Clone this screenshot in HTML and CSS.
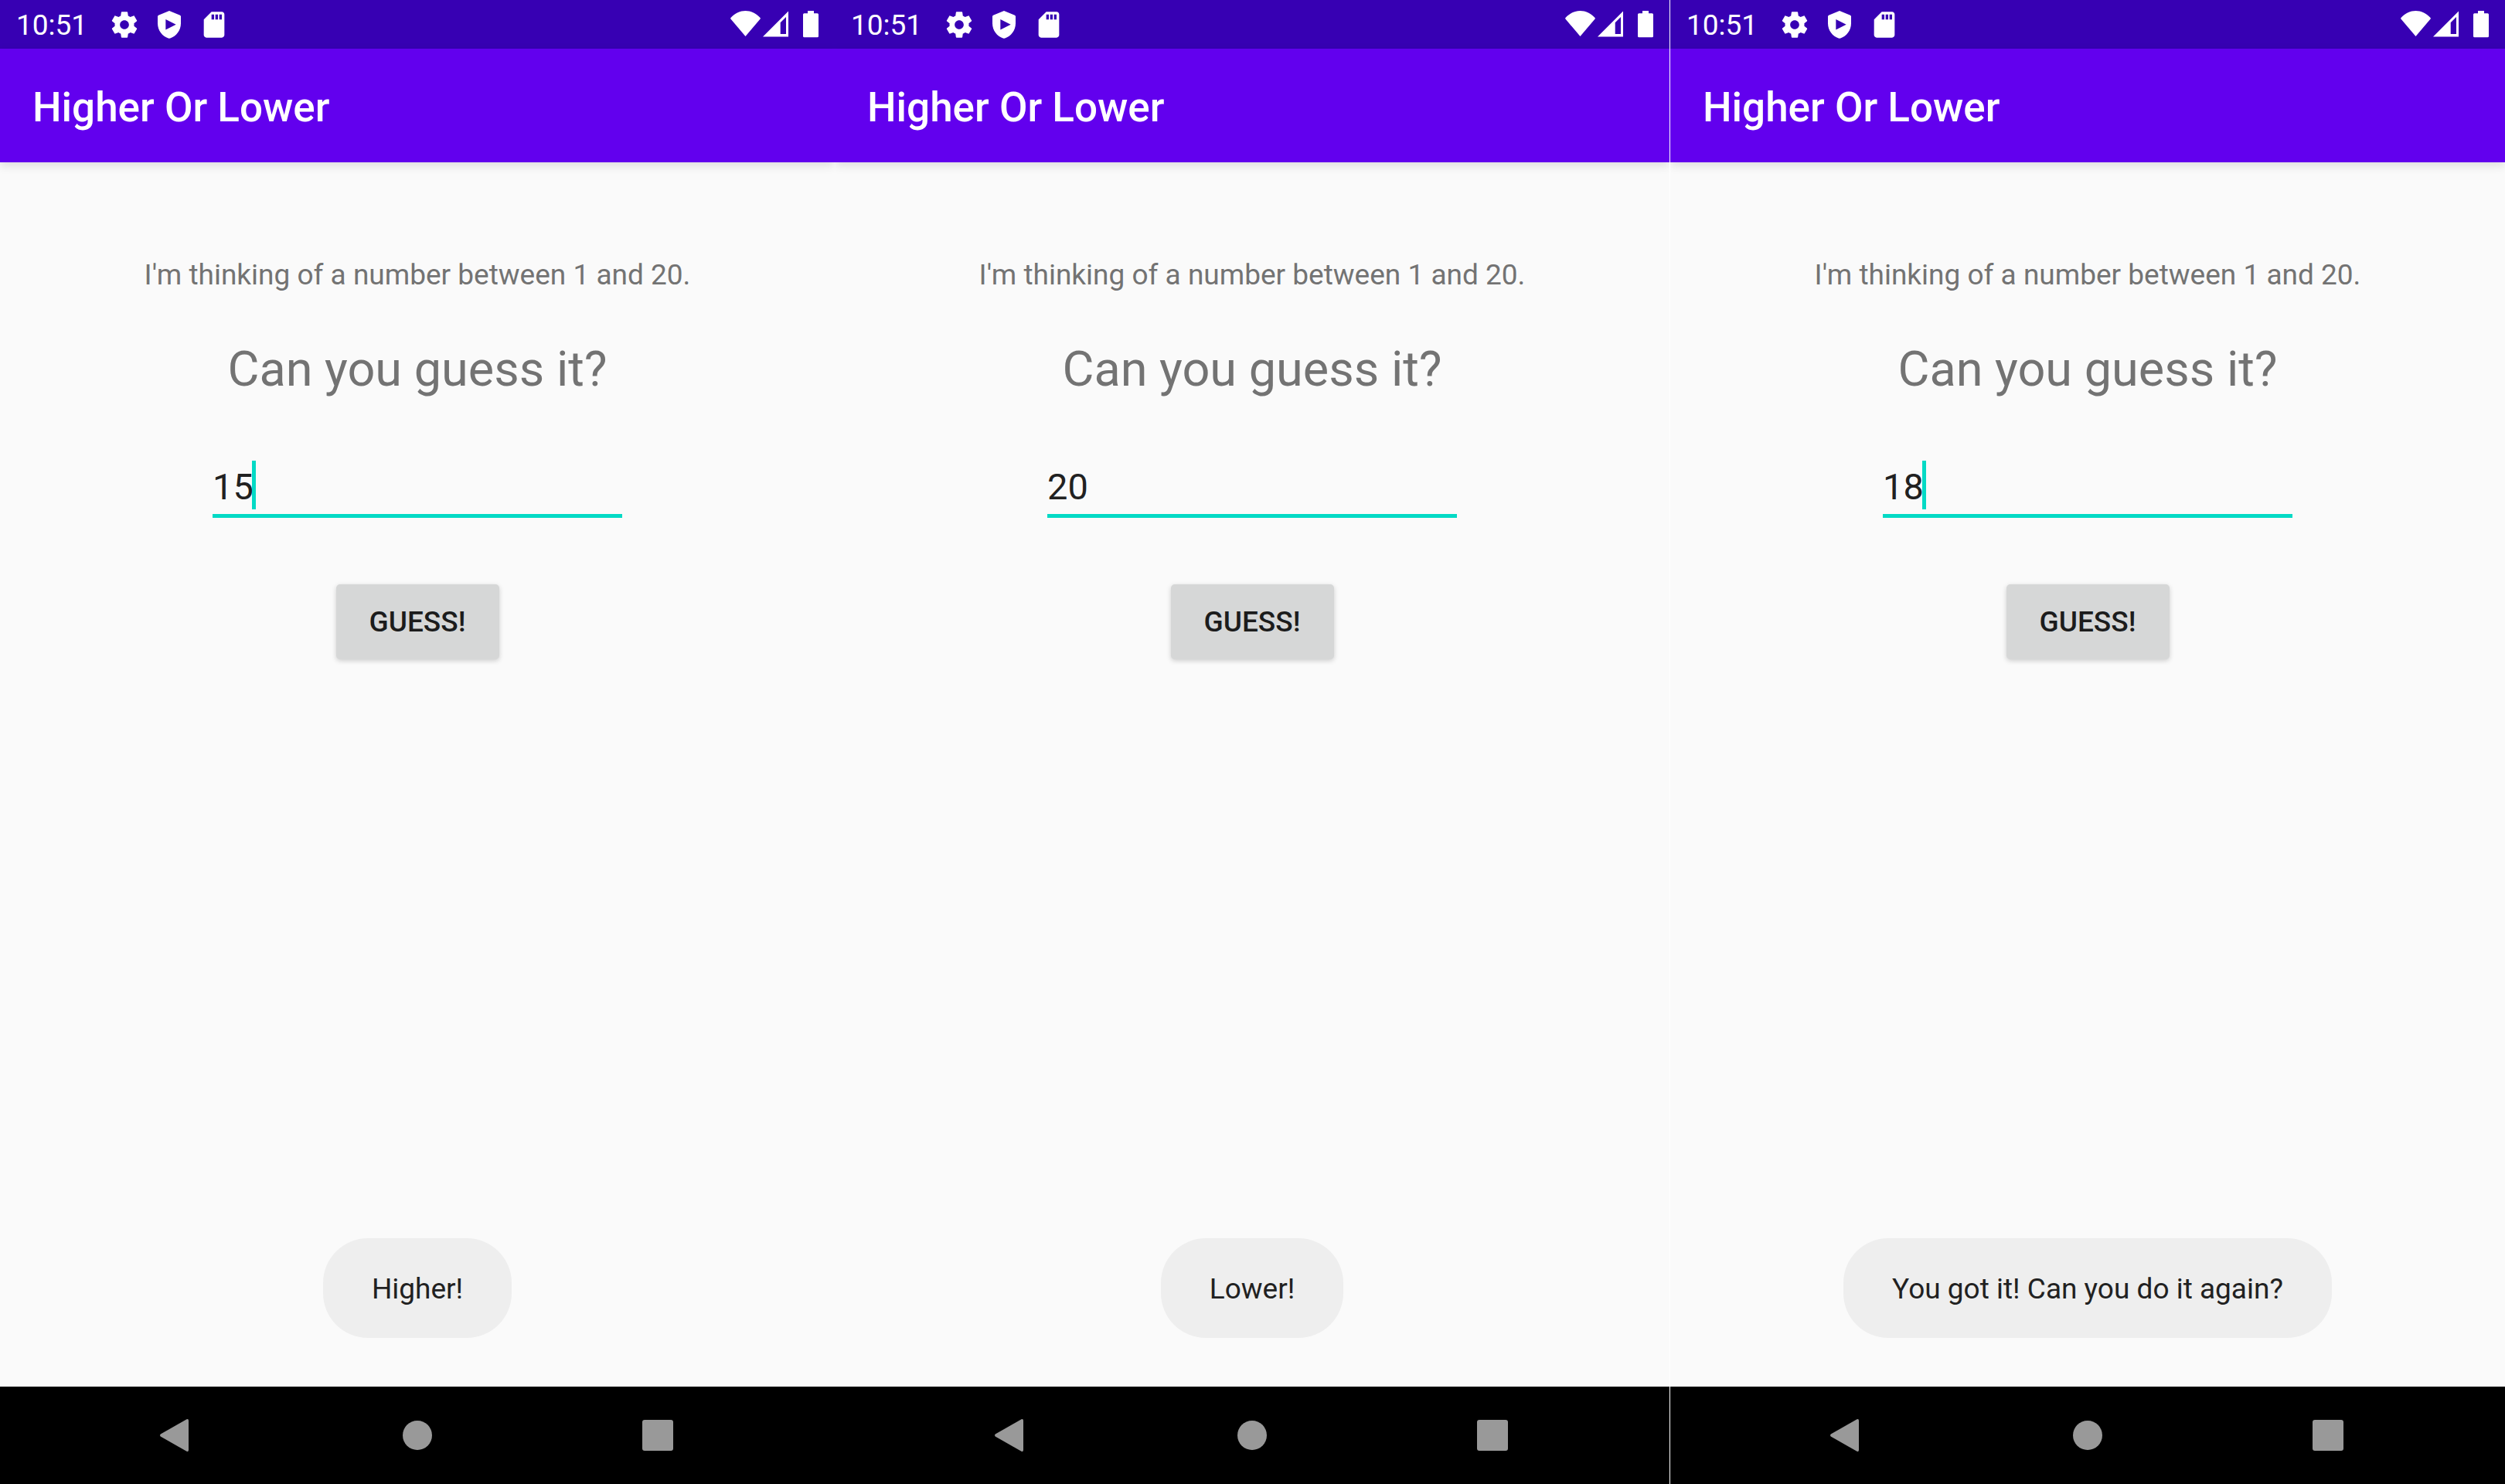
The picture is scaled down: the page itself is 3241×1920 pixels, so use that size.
FILE: index.html
```html
<!DOCTYPE html>
<html lang="en">
<head>
<meta charset="utf-8">
<meta name="viewport" content="width=device-width, initial-scale=1">
<title>Higher Or Lower</title>
<link rel="stylesheet" href="styles.css">
</head>
<body>
<svg class="sprite" aria-hidden="true">
  <symbol id="gear" viewBox="0 0 24 24"><path d="M19.43 12.98c.04-.32.07-.64.07-.98s-.03-.66-.07-.98l2.11-1.65c.19-.15.24-.42.12-.64l-2-3.46c-.12-.22-.39-.3-.61-.22l-2.49 1c-.52-.4-1.08-.73-1.69-.98l-.38-2.65C14.46 2.18 14.25 2 14 2h-4c-.25 0-.46.18-.49.42l-.38 2.65c-.61.25-1.17.59-1.69.98l-2.49-1c-.23-.09-.49 0-.61.22l-2 3.46c-.13.22-.07.49.12.64l2.11 1.65c-.04.32-.07.65-.07.98s.03.66.07.98l-2.11 1.65c-.19.15-.24.42-.12.64l2 3.46c.12.22.39.3.61.22l2.49-1c.52.4 1.08.73 1.69.98l.38 2.65c.03.24.24.42.49.42h4c.25 0 .46-.18.49-.42l.38-2.65c.61-.25 1.17-.59 1.69-.98l2.49 1c.23.09.49 0 .61-.22l2-3.46c.12-.22.07-.49-.12-.64l-2.11-1.65zM12 15.5c-1.93 0-3.5-1.57-3.5-3.5s1.57-3.5 3.5-3.5 3.5 1.57 3.5 3.5-1.57 3.5-3.5 3.5z"/></symbol>
  <symbol id="shield" viewBox="0 0 24 24"><path fill-rule="evenodd" d="M12 1.2L3.6 4.6Q3 4.9 3 5.5V11c0 5.5 3.6 10 8.3 11.5q.7.2 1.4 0C17.4 21 21 16.500 21 11V5.500Q21 4.900 20.400 4.600ZM9.200 7.800V15.900L17.200 11.850Z"/></symbol>
  <symbol id="sdcard" viewBox="0 0 24 24"><path d="M18 2h-8L4.020 8 4 20c0 1.100.9 2 2 2h12c1.100 0 2-.9 2-2V4c0-1.100-.9-2-2-2zm-6 6h-2V4h2v4zm3 0h-2V4h2v4zm3 0h-2V4h2v4z"/></symbol>
  <symbol id="wifi" viewBox="0 0 39 36"><path d="M19.500 33L.4 10.500Q-.2 9.500.7 8.700C6 3 12.500 0 19.500 0S33 3 38.300 8.700Q39.200 9.500 38.600 10.500Z"/></symbol>
  <symbol id="signal" viewBox="0 0 33 36"><path fill-rule="evenodd" d="M0 33.500L33 .5V33.500ZM22.700 30H30V8L22.700 15.300Z"/></symbol>
  <symbol id="battery" viewBox="0 0 20 36"><path d="M6 0h8v3.300h4.500q1.500 0 1.500 1.500v28q0 1.500-1.500 1.500h-17q-1.500 0-1.500-1.500v-28q0-1.500 1.500-1.500H6Z"/></symbol>
  <symbol id="back" viewBox="0 0 48 48"><path d="M2.700 22.500L36.500 3.300Q39 2.500 39 5V43Q39 45.500 36.500 44.700L2.700 25.500Q1 24 2.700 22.500Z"/></symbol>
  <symbol id="home" viewBox="0 0 48 48"><circle cx="24" cy="24" r="19"/></symbol>
  <symbol id="recent" viewBox="0 0 48 48"><rect x="4" y="4" width="40" height="40" rx="3"/></symbol>
</svg>

<main class="screens">
  <section class="phone">
    <div class="status">
      <span class="clock">10:51</span>
      <div class="notices">
        <svg class="notice"><use href="#gear"/></svg>
        <svg class="notice"><use href="#shield"/></svg>
        <svg class="notice"><use href="#sdcard"/></svg>
      </div>
      <div class="system">
        <svg class="wifi"><use href="#wifi"/></svg>
        <svg class="signal"><use href="#signal"/></svg>
        <svg class="battery"><use href="#battery"/></svg>
      </div>
    </div>
    <header class="appbar"><h1 class="title">Higher Or Lower</h1></header>
    <form class="game">
      <p class="intro">I'm thinking of a number between 1 and 20.</p>
      <label class="question" for="guess-1">Can you guess it?</label>
      <div class="field">
        <input class="guess" id="guess-1" type="text" inputmode="numeric" value="15">
        <span class="caret"></span>
      </div>
      <button class="submit" type="button">GUESS!</button>
      <output class="toast" for="guess-1">Higher!</output>
    </form>
    <nav class="navbar">
      <button class="key" type="button" aria-label="Back"><svg class="glyph"><use href="#back"/></svg></button>
      <button class="key" type="button" aria-label="Home"><svg class="glyph"><use href="#home"/></svg></button>
      <button class="key" type="button" aria-label="Recent apps"><svg class="glyph"><use href="#recent"/></svg></button>
    </nav>
  </section>

  <section class="phone">
    <div class="status">
      <span class="clock">10:51</span>
      <div class="notices">
        <svg class="notice"><use href="#gear"/></svg>
        <svg class="notice"><use href="#shield"/></svg>
        <svg class="notice"><use href="#sdcard"/></svg>
      </div>
      <div class="system">
        <svg class="wifi"><use href="#wifi"/></svg>
        <svg class="signal"><use href="#signal"/></svg>
        <svg class="battery"><use href="#battery"/></svg>
      </div>
    </div>
    <header class="appbar"><h1 class="title">Higher Or Lower</h1></header>
    <form class="game">
      <p class="intro">I'm thinking of a number between 1 and 20.</p>
      <label class="question" for="guess-2">Can you guess it?</label>
      <div class="field">
        <input class="guess" id="guess-2" type="text" inputmode="numeric" value="20">
      </div>
      <button class="submit" type="button">GUESS!</button>
      <output class="toast" for="guess-2">Lower!</output>
    </form>
    <nav class="navbar">
      <button class="key" type="button" aria-label="Back"><svg class="glyph"><use href="#back"/></svg></button>
      <button class="key" type="button" aria-label="Home"><svg class="glyph"><use href="#home"/></svg></button>
      <button class="key" type="button" aria-label="Recent apps"><svg class="glyph"><use href="#recent"/></svg></button>
    </nav>
  </section>

  <section class="phone phone-divided">
    <div class="status">
      <span class="clock">10:51</span>
      <div class="notices">
        <svg class="notice"><use href="#gear"/></svg>
        <svg class="notice"><use href="#shield"/></svg>
        <svg class="notice"><use href="#sdcard"/></svg>
      </div>
      <div class="system">
        <svg class="wifi"><use href="#wifi"/></svg>
        <svg class="signal"><use href="#signal"/></svg>
        <svg class="battery"><use href="#battery"/></svg>
      </div>
    </div>
    <header class="appbar"><h1 class="title">Higher Or Lower</h1></header>
    <form class="game">
      <p class="intro">I'm thinking of a number between 1 and 20.</p>
      <label class="question" for="guess-3">Can you guess it?</label>
      <div class="field">
        <input class="guess" id="guess-3" type="text" inputmode="numeric" value="18">
        <span class="caret"></span>
      </div>
      <button class="submit" type="button">GUESS!</button>
      <output class="toast" for="guess-3">You got it! Can you do it again?</output>
    </form>
    <nav class="navbar">
      <button class="key" type="button" aria-label="Back"><svg class="glyph"><use href="#back"/></svg></button>
      <button class="key" type="button" aria-label="Home"><svg class="glyph"><use href="#home"/></svg></button>
      <button class="key" type="button" aria-label="Recent apps"><svg class="glyph"><use href="#recent"/></svg></button>
    </nav>
  </section>
</main>
</body>
</html>
```

FILE: styles.css
```css
* {
  box-sizing: border-box;
}

body {
  margin: 0;
  background: #fafafa;
  color: #737373;
  font-family: Roboto, "Liberation Sans", sans-serif;
  font-size: 37px;
  line-height: 44px;
}

.sprite {
  display: none;
}

.screens {
  display: flex;
  min-height: 100vh;
}

.phone {
  flex: 1;
  min-width: 0;
  display: flex;
  flex-direction: column;
  overflow: hidden;
}

.phone-divided {
  box-sizing: content-box;
  border-left: 1px solid #fff;
}

/* System status bar */
.status {
  display: flex;
  align-items: center;
  gap: 28px;
  height: 63px;
  padding: 0 21px;
  background: #3700b3;
  color: #fff;
}

.status svg {
  display: block;
  height: 36px;
  fill: currentColor;
}

.clock {
  padding-top: 2px;
}

.notices {
  display: flex;
  gap: 18px;
}

.status .notice {
  width: 40px;
  height: 40px;
}

.system {
  display: flex;
  gap: 3px;
  margin-left: auto;
}

.wifi {
  width: 39px;
}

.signal {
  width: 33px;
}

.battery {
  width: 20px;
  margin-left: 16px;
}

/* App bar */
.appbar {
  display: flex;
  align-items: center;
  height: 147px;
  padding: 4px 42px 0;
  background: #6200ee;
  box-shadow: 0 4px 12px rgba(0, 0, 0, 0.12);
}

.title {
  margin: 0;
  color: #fff;
  font-size: 53px;
  font-weight: 500;
  line-height: 62px;
}

/* Game */
.game {
  flex: 1;
  display: flex;
  flex-direction: column;
  align-items: center;
  padding: 124px 42px 63px;
}

.intro {
  margin: 0;
}

.question {
  margin-top: 63px;
  font-size: 63px;
  line-height: 74px;
}

.field {
  position: relative;
  width: 530px;
  max-width: 100%;
  margin-top: 87px;
}

.guess {
  display: block;
  width: 100%;
  height: 68px;
  padding: 0 0 9px;
  border: 0;
  border-bottom: 5px solid #03dac5;
  border-radius: 0;
  outline: 0;
  background: transparent;
  color: #212121;
  font: inherit;
  font-size: 47px;
  line-height: 54px;
}

.caret {
  position: absolute;
  top: -6px;
  left: 51px;
  width: 5px;
  height: 63px;
  background: #03dac5;
}

.submit {
  width: 211px;
  height: 97px;
  margin: 86px 0 64px;
  padding: 1px 0 0;
  border: 0;
  border-radius: 5px;
  background: #d6d7d7;
  box-shadow: 0 2px 6px rgba(0, 0, 0, 0.18);
  color: #1c1c1c;
  font: inherit;
  font-weight: 500;
}

.toast {
  margin-top: auto;
  padding: 44px 63px 41px;
  border-radius: 58px;
  background: #eee;
  color: #212121;
}

/* System navigation */
.navbar {
  display: flex;
  justify-content: center;
  height: 126px;
  background: #000;
}

.key {
  display: flex;
  align-items: center;
  justify-content: center;
  width: 311px;
  padding: 0;
  border: 0;
  background: transparent;
  color: #999;
}

.glyph {
  width: 48px;
  height: 48px;
  fill: currentColor;
}
```
